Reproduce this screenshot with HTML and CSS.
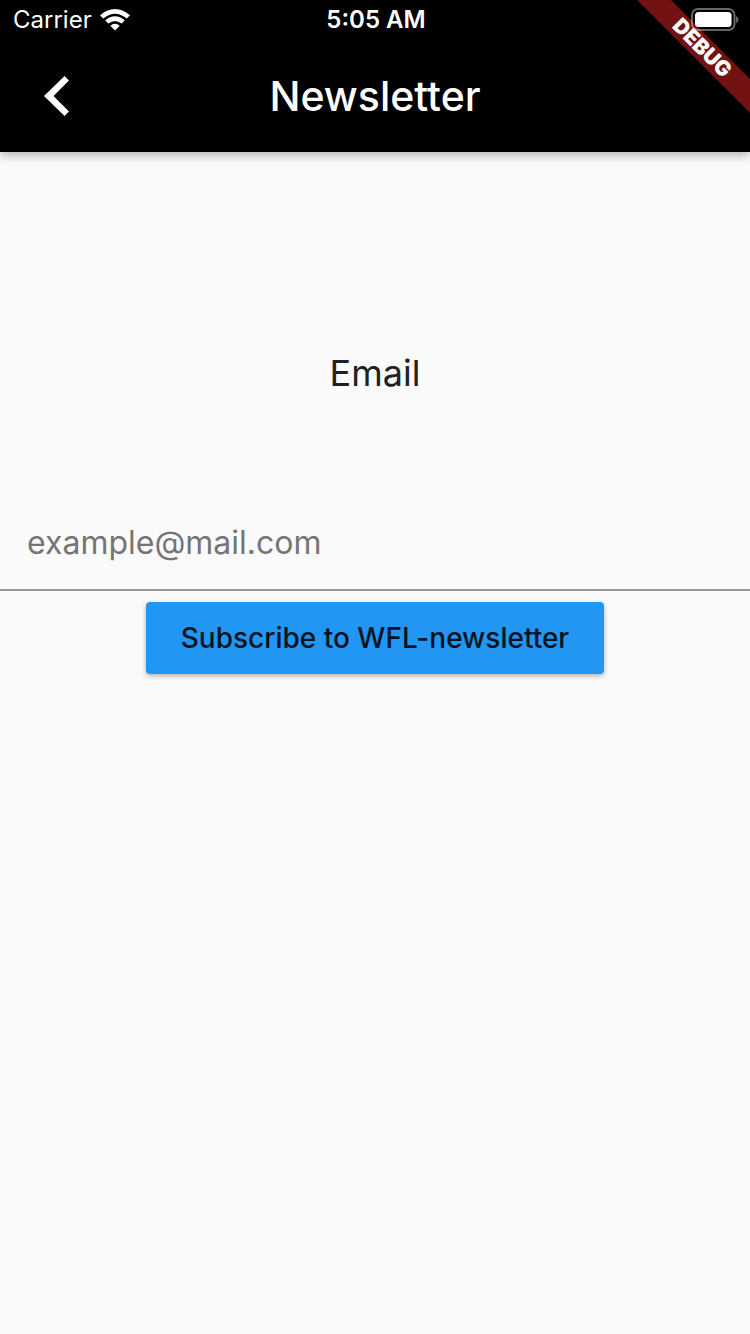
FILE: index.html
```html
<!DOCTYPE html>
<html lang="en">
<head>
<meta charset="utf-8">
<meta name="viewport" content="width=device-width, initial-scale=1">
<title>Newsletter</title>
<link rel="stylesheet" href="styles.css">
</head>
<body>
<div class="screen">
  <header class="top">
    <div class="status">
      <div class="carrier">
        <span>Carrier</span>
        <svg class="wifi" viewBox="0 0 30 22" aria-hidden="true">
          <path d="M0 6.300Q15 -6.300 30 6.300L26.800 9.500Q15 0 3.200 9.500Z"/>
          <path d="M5.200 11.500Q15 3.200 24.800 11.500L21.600 14.600Q15 9.200 8.400 14.600Z"/>
          <path d="M10.300 16.700Q15 12.800 19.700 16.700L15 21.500Z"/>
        </svg>
      </div>
      <time class="clock">5:05 AM</time>
      <svg class="battery" viewBox="0 0 48 24" role="img" aria-label="Battery full">
        <rect class="battery-case" x="1" y="1" width="42.500" height="21" rx="6"/>
        <rect x="4" y="4" width="36.500" height="15" rx="3.500"/>
        <path class="battery-tip" d="M45 8Q47.500 9 47.500 11.500Q47.500 14 45 15Z"/>
      </svg>
    </div>
    <nav class="bar">
      <button class="back" type="button" aria-label="Back">
        <svg viewBox="0 0 26 40" aria-hidden="true"><path d="M20.500 0L25 4.600L9.500 20L25 35.400L20.500 40L0 20Z"/></svg>
      </button>
      <h1 class="title">Newsletter</h1>
    </nav>
  </header>
  <main>
    <form class="form">
      <label class="label" for="email">Email</label>
      <input class="field" id="email" type="email" placeholder="example@mail.com">
      <button class="subscribe" type="button">Subscribe to WFL-newsletter</button>
    </form>
  </main>
  <div class="ribbon">DEBUG</div>
</div>
</body>
</html>
```
FILE: styles.css
```css
* {
  box-sizing: border-box;
}

body {
  margin: 0;
  background: #fafafa;
  color: #212121;
  font-family: Inter, "Liberation Sans", sans-serif;
}

.screen {
  position: relative;
  min-height: 100vh;
  overflow: hidden;
}

.top {
  background: #000;
  color: #fff;
  box-shadow: 0 3px 10px rgba(0, 0, 0, 0.3);
}

.status {
  display: grid;
  grid-template-columns: 1fr auto 1fr;
  align-items: center;
  height: 40px;
  padding: 0 11px 0 13px;
  font-size: 24px;
  line-height: 40px;
}

.carrier {
  display: flex;
  align-items: center;
  gap: 8px;
}

.wifi {
  width: 30px;
  height: 22px;
  fill: #fff;
}

.clock {
  font-weight: 600;
}

.battery {
  position: relative;
  z-index: 2;
  justify-self: end;
  width: 48px;
  height: 24px;
  fill: #fff;
}

.battery-case {
  fill: none;
  stroke: rgba(255, 255, 255, 0.4);
  stroke-width: 2;
}

.battery-tip {
  fill: rgba(255, 255, 255, 0.4);
}

.bar {
  display: grid;
  grid-template-columns: 114px 1fr 114px;
  align-items: center;
  height: 112px;
}

.back {
  display: flex;
  align-items: center;
  justify-content: center;
  height: 112px;
  padding: 0;
  border: 0;
  background: none;
}

.back svg {
  width: 26px;
  height: 40px;
  fill: #fff;
}

.title {
  margin: 0;
  text-align: center;
  font-size: 41px;
  line-height: 48px;
  font-weight: 500;
}

.form {
  display: flex;
  flex-direction: column;
  align-items: center;
  padding-top: 199px;
}

.label {
  font-size: 36px;
  line-height: 44px;
}

.field {
  width: 100%;
  height: 96px;
  margin-top: 100px;
  padding: 0 27px;
  border: 0;
  border-bottom: 2px solid #979797;
  border-radius: 0;
  background: transparent;
  color: inherit;
  font: 32px/40px Inter, "Liberation Sans", sans-serif;
}

.field::placeholder {
  color: #757575;
  opacity: 1;
}

.subscribe {
  height: 72px;
  margin-top: 11px;
  padding: 0 35px;
  border: 0;
  border-radius: 4px;
  background: #2196f3;
  color: #07131e;
  font: 500 28px/36px Inter, "Liberation Sans", sans-serif;
  box-shadow: 0 2px 5px rgba(0, 0, 0, 0.3);
}

.ribbon {
  position: absolute;
  top: 36px;
  right: -52px;
  width: 200px;
  height: 24px;
  background: #731212;
  color: #fff;
  text-align: center;
  font-size: 21px;
  line-height: 24px;
  font-weight: 900;
  transform: rotate(45deg);
}
```
